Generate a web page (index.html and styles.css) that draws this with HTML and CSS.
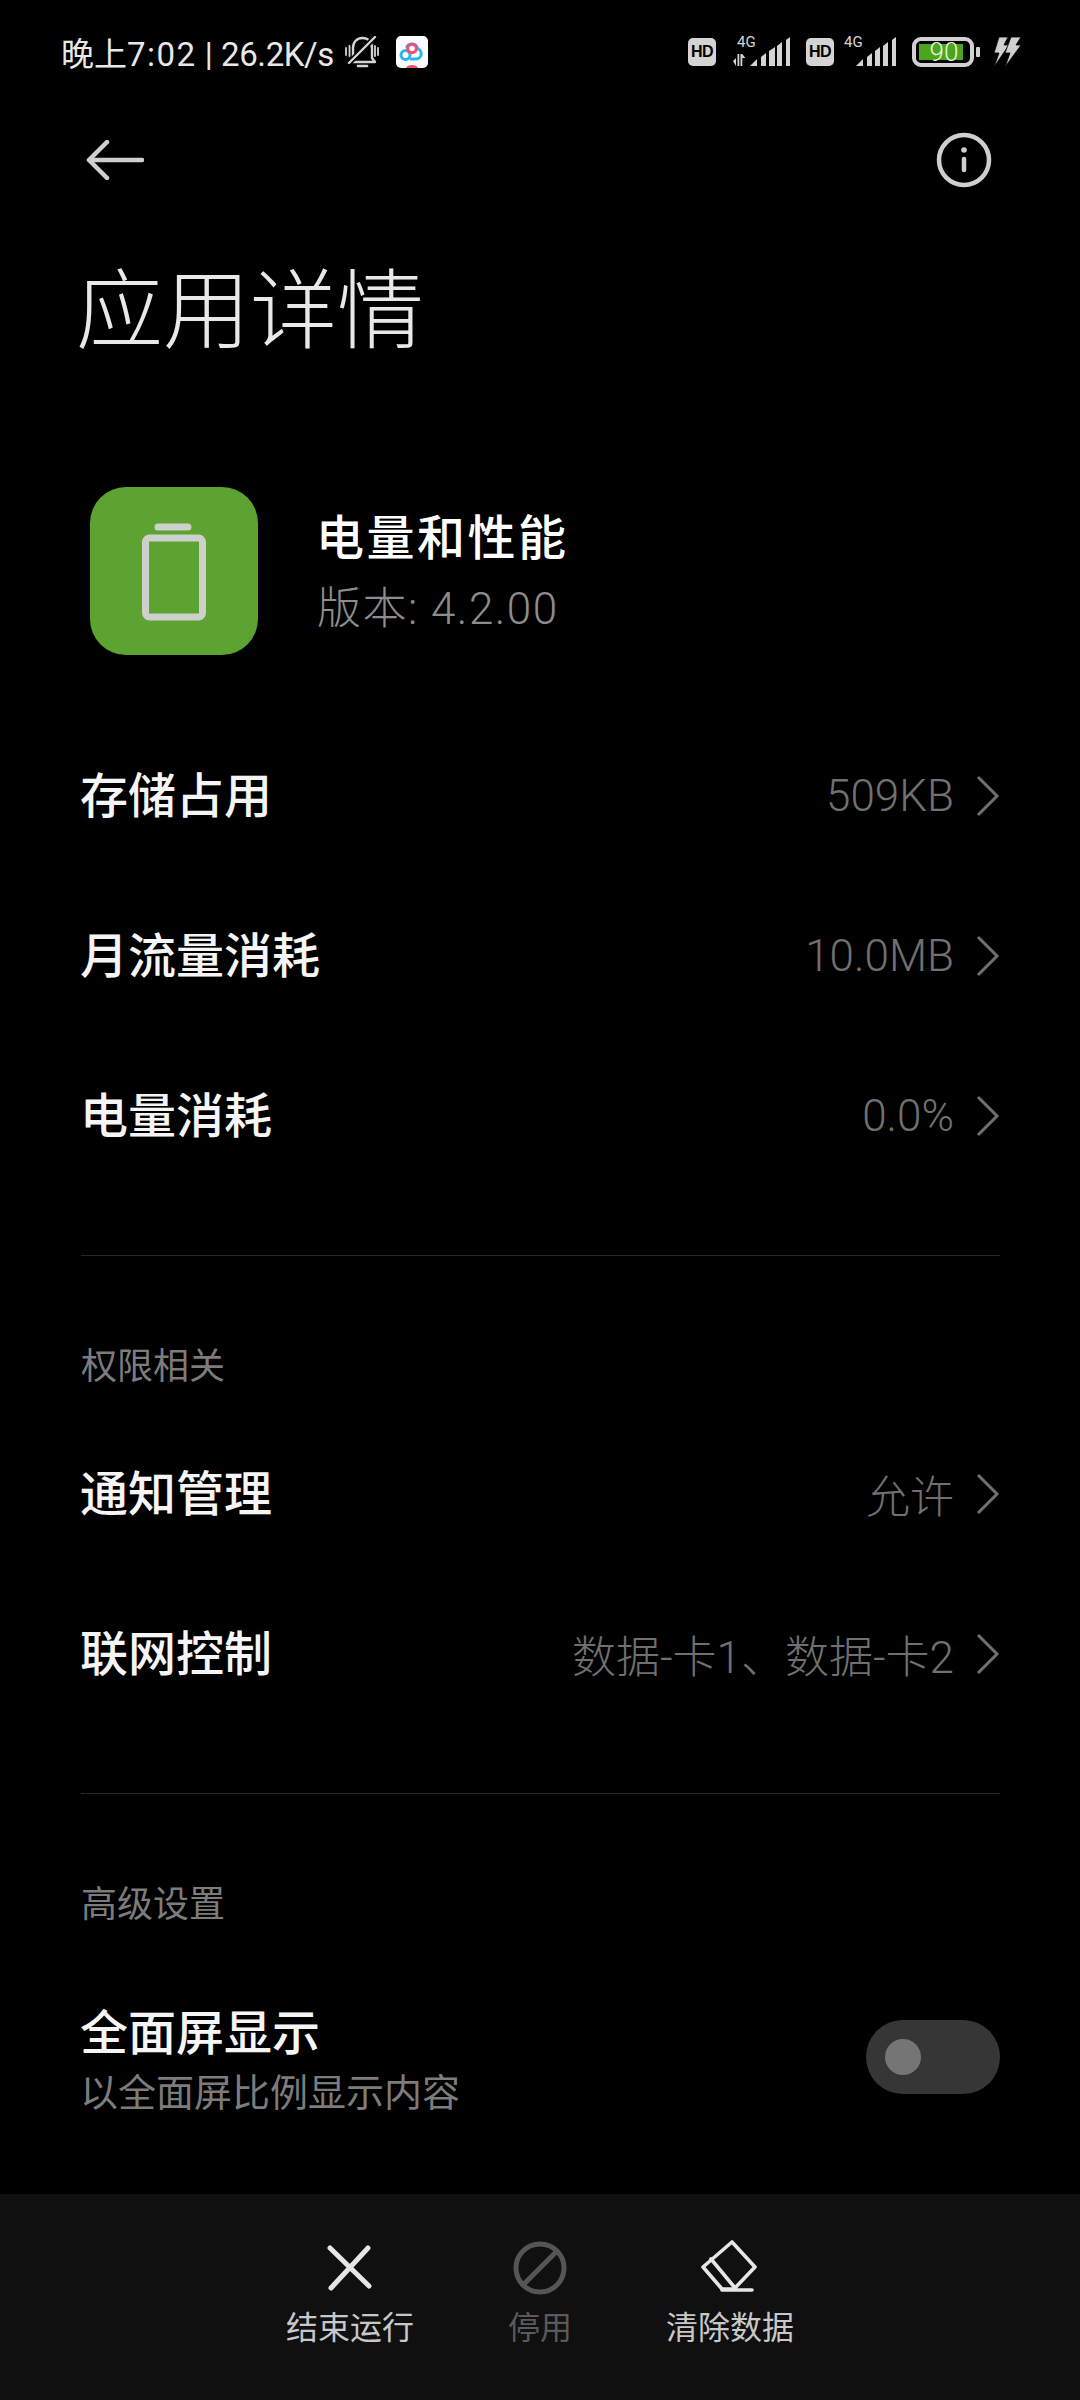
FILE: index.html
```html
<!DOCTYPE html>
<html lang="zh-CN">
<head>
<meta charset="utf-8">
<title>应用详情</title>
<link rel="stylesheet" href="styles.css">
</head>
<body>
<div class="page">
  <header class="status">
    <div class="status-left">
      <span class="status-text">晚上<span class="clock">7:02</span> | <span class="speed">26.2K/s</span></span>
      <svg class="bell" width="34" height="32" viewBox="0 0 34 32" fill="none" stroke="#d4d4d4" stroke-width="2.400" stroke-linecap="round" stroke-linejoin="round">
        <path d="M5 26h25l-3-4V12c0-6-4-10-9.500-10S8 6 8 12v10z"/>
        <path d="M4 27L30 1" stroke="#000" stroke-width="5.500"/>
        <path d="M4 27L30 1"/>
        <path d="M1 12v7M4.500 10v10M30 10v10M33 12v7" stroke-width="1.800"/>
        <path d="M13 30h9" stroke-width="2.600"/>
      </svg>
      <svg class="applogo" width="32" height="32" viewBox="0 0 32 32">
        <rect width="32" height="32" rx="5" fill="#fff"/>
        <circle cx="9.500" cy="19" r="4.500" fill="none" stroke="#2bb4f2" stroke-width="3"/>
        <path d="M20 12.500a4.800 4.800 0 1 1 0 10.500h-6" fill="none" stroke="#2bb4f2" stroke-width="3"/>
        <path d="M10.500 12a5.800 5.800 0 0 1 11 0" fill="none" stroke="#2bb4f2" stroke-width="3"/>
        <circle cx="16" cy="12.500" r="4.300" fill="none" stroke="#f0506e" stroke-width="3"/>
        <path d="M10 32a6 3 0 0 1 12 0z" fill="#f0506e"/>
      </svg>
    </div>
    <div class="status-right">
      <span class="hd">HD</span>
      <svg class="sig-a" width="57" height="48" viewBox="0 -8 57 48">
        <text class="four-g" x="4" y="11">4G</text>
        <path d="M0 25l3-3v8zM4.500 18h1.800v12H4.500zM7.500 18h1.800v12H7.500zM9.300 18l3 4h-3z" fill="#d4d4d4"/>
        <g fill="#d4d4d4">
          <polygon points="17,30 24,23 24,30"/>
          <polygon points="28,21 33,17 33,30 28,30"/>
          <polygon points="36,15 42,11 42,30 36,30"/>
          <polygon points="44,10 49,6 49,30 44,30"/>
          <polygon points="53,4 57,1 57,30 53,30"/>
        </g>
      </svg>
      <span class="hd">HD</span>
      <svg class="sig-b" width="52" height="48" viewBox="0 -8 52 48">
        <text class="four-g" x="0" y="11">4G</text>
        <g fill="#d4d4d4">
          <polygon points="12,30 19,23 19,30"/>
          <polygon points="23,21 28,17 28,30 23,30"/>
          <polygon points="31,15 36,11 36,30 31,30"/>
          <polygon points="39,10 44,6 44,30 39,30"/>
          <polygon points="48,4 52,1 52,30 48,30"/>
        </g>
      </svg>
      <div class="battery">
        <div class="battery-body"><div class="battery-fill"></div><span class="battery-num">90</span></div>
        <div class="battery-nub"></div>
      </div>
      <svg class="bolt" width="29" height="32" viewBox="0 0 29 32" fill="#cfcfcf" stroke="#000" stroke-width="0.800">
        <path d="M6 1h9l-4 8h5L1 31l5-14H1z"/>
        <path d="M18 1h10l-5 8h5L12 31l5-14h-5z"/>
      </svg>
    </div>
  </header>

  <nav class="toolbar">
    <svg class="back" width="58" height="40" viewBox="0 0 58 40" fill="none" stroke="#cfcfcf" stroke-width="4.500" stroke-linecap="round" stroke-linejoin="round">
      <path d="M21 2L3 20l18 18M3 20h53"/>
    </svg>
    <svg class="info" width="56" height="56" viewBox="0 0 56 56" fill="none" stroke="#cfcfcf" stroke-width="4.500" stroke-linecap="round">
      <circle cx="28" cy="28" r="25"/>
      <path d="M28 27v11"/>
      <circle cx="28" cy="18" r="2.800" fill="#cfcfcf" stroke="none"/>
    </svg>
  </nav>

  <h1 class="title">应用详情</h1>

  <section class="app">
    <div class="app-icon">
      <svg width="66" height="98" viewBox="0 0 66 98" fill="none" stroke="#cdd0cb">
        <rect x="4.500" y="15" width="57" height="79" rx="4" stroke-width="7"/>
        <path d="M17 4h30" stroke-width="7" stroke-linecap="round"/>
      </svg>
    </div>
    <div class="app-text">
      <div class="app-name">电量和性能</div>
      <div class="app-version">版本: 4.2.00</div>
    </div>
  </section>

  <main class="content">
    <section class="group">
      <div class="row"><span class="row-label">存储占用</span><span class="row-value">509KB</span><svg class="chev" width="24" height="44" viewBox="0 0 24 44" fill="none"><path d="M2 3l19 19L2 41"/></svg></div>
      <div class="row"><span class="row-label">月流量消耗</span><span class="row-value">10.0MB</span><svg class="chev" width="24" height="44" viewBox="0 0 24 44" fill="none"><path d="M2 3l19 19L2 41"/></svg></div>
      <div class="row"><span class="row-label">电量消耗</span><span class="row-value">0.0%</span><svg class="chev" width="24" height="44" viewBox="0 0 24 44" fill="none"><path d="M2 3l19 19L2 41"/></svg></div>
    </section>
    <hr class="divider">
    <section class="group">
      <h2 class="group-title">权限相关</h2>
      <div class="row"><span class="row-label">通知管理</span><span class="row-value">允许</span><svg class="chev" width="24" height="44" viewBox="0 0 24 44" fill="none"><path d="M2 3l19 19L2 41"/></svg></div>
      <div class="row"><span class="row-label">联网控制</span><span class="row-value">数据-卡1、数据-卡2</span><svg class="chev" width="24" height="44" viewBox="0 0 24 44" fill="none"><path d="M2 3l19 19L2 41"/></svg></div>
    </section>
    <hr class="divider">
    <section class="group">
      <h2 class="group-title">高级设置</h2>
      <div class="row row-switch">
        <div class="switch-text">
          <div class="row-label">全面屏显示</div>
          <div class="row-sub">以全面屏比例显示内容</div>
        </div>
        <div class="switch"><div class="knob"></div></div>
      </div>
    </section>
  </main>

  <footer class="actions">
    <div class="action">
      <svg width="60" height="58" viewBox="0 0 60 58" fill="none" stroke="#e6e6e6" stroke-width="5" stroke-linecap="round">
        <path d="M10 10l39 38M48 10L11 50"/>
      </svg>
      <span class="action-label">结束运行</span>
    </div>
    <div class="action action-off">
      <svg width="60" height="58" viewBox="0 0 60 58" fill="none" stroke="#555" stroke-width="5" stroke-linecap="round">
        <circle cx="30" cy="30" r="24"/>
        <path d="M13 47l34-34"/>
      </svg>
      <span class="action-label">停用</span>
    </div>
    <div class="action">
      <svg width="60" height="58" viewBox="0 0 60 58" fill="none" stroke="#e6e6e6" stroke-width="3.600" stroke-linejoin="round" stroke-linecap="round">
        <path d="M32 4l23 25-21 22H22L3 29z"/>
        <path d="M11 21l24 29M22 52h30"/>
      </svg>
      <span class="action-label">清除数据</span>
    </div>
  </footer>
</div>
</body>
</html>
```

FILE: styles.css
```css
* { box-sizing: border-box; }
html, body { margin: 0; padding: 0; background: #000; }
body {
  width: 1080px;
  height: 2400px;
  overflow: hidden;
  font-family: "Roboto", "Noto Sans CJK SC", sans-serif;
  color: #fff;
}
.page { width: 1080px; height: 2400px; display: flex; flex-direction: column; }

/* status bar */
.status {
  height: 104px;
  padding: 0 58px 0 61px;
  display: flex;
  align-items: center;
  justify-content: space-between;
  flex: none;
}
.status-left { display: flex; align-items: center; }
.status-text { font-size: 33px; color: #e8e8e8; width: 284px; white-space: nowrap; font-weight: 400; }
.clock { letter-spacing: 1.500px; }
.speed { letter-spacing: -0.400px; }
.applogo { margin-left: 17px; }
.status-right { display: flex; align-items: center; }
.hd {
  width: 28px; height: 28px;
  background: #d4d4d4;
  border-radius: 5px;
  color: #000;
  font-family: "Liberation Sans", sans-serif;
  font-size: 16px;
  font-weight: 700;
  line-height: 28px;
  text-align: center;
  letter-spacing: -0.500px;
}
.sig-a { margin: 0 16px 0 17px; }
.sig-b { margin: 0 16px 0 10px; }
.four-g { font-family: "Roboto", sans-serif; font-size: 15px; fill: #d4d4d4; }
.battery { display: flex; align-items: center; width: 68px; }
.battery-body {
  position: relative;
  width: 62px; height: 30px;
  border: 4px solid #d2d2d2;
  border-radius: 9px;
  padding: 3px;
}
.battery-fill { width: 44px; height: 16px; background: #4ca61d; }
.battery-num {
  position: absolute;
  left: 10px; top: -5px;
  width: 36px;
  font-size: 26px;
  line-height: 32px;
  color: #e6f7da;
  text-align: center;
  font-weight: 300;
}
.battery-nub { width: 4px; height: 10px; background: #d2d2d2; margin-left: 2px; border-radius: 1px; }
.bolt { margin-left: 13px; }

/* toolbar */
.toolbar {
  height: 112px;
  padding: 0 88px 0 86px;
  display: flex;
  align-items: center;
  justify-content: space-between;
  flex: none;
}
.title {
  margin: 51px 0 0;
  padding-left: 76px;
  font-size: 87px;
  line-height: 90px;
  height: 90px;
  font-weight: 200;
  color: #e8e8e8;
  flex: none;
}

/* app header */
.app {
  margin-top: 130px;
  padding-left: 90px;
  display: flex;
  align-items: center;
  flex: none;
}
.app-icon {
  width: 168px; height: 168px;
  border-radius: 36px;
  background: #5ca332;
  display: flex;
  align-items: center;
  justify-content: center;
  padding-top: 2px;
}
.app-text { margin-left: 59px; margin-top: 4px; }
.app-name { font-size: 48px; line-height: 60px; letter-spacing: 2.500px; font-weight: 500; color: #fff; margin-top: -2px; margin-left: -1px; }
.app-version { font-size: 44px; line-height: 52px; margin-top: 14px; color: #8c8c8c; font-weight: 300; letter-spacing: 1.500px; }

/* list */
.content { flex: 1; padding: 61px 80px 0 81px; min-height: 0; }
.group { display: flex; flex-direction: column; }
.row { height: 160px; display: flex; align-items: center; }
.row-label { font-size: 48px; font-weight: 500; color: #f5f5f5; line-height: 60px; margin-left: -1px; padding-top: 2px; }
.row-value { margin-left: auto; font-size: 44px; font-weight: 300; color: #707070; white-space: nowrap; margin-right: 2px; }
.chev { margin-left: 20px; flex: none; stroke: #707070; stroke-width: 3; }
.divider { height: 1px; border: 0; margin: 59px 0 0; background: #262626; }
.group-title {
  margin: 86px 0 22px;
  font-size: 36px;
  line-height: 50px;
  font-weight: 400;
  color: #7c7c7c;
}
.row-switch { height: 210px; }
.switch-text { display: flex; flex-direction: column; padding-top: 6px; }
.row-sub { font-size: 38px; line-height: 50px; margin-top: 4px; margin-left: -1px; color: #7c7c7c; font-weight: 400; }
.switch {
  margin-left: auto;
  width: 134px; height: 74px;
  border-radius: 37px;
  background: #363636;
  padding: 19px;
}
.knob { width: 36px; height: 36px; border-radius: 50%; background: #757575; }

/* bottom actions */
.actions {
  flex: none;
  height: 206px;
  background: #101010;
  padding-top: 44px;
  display: flex;
  justify-content: center;
}
.action { width: 190px; display: flex; flex-direction: column; align-items: center; }
.action-label { margin-top: 10px; font-size: 32px; line-height: 44px; color: #c8c8c8; }
.action-off .action-label { color: #5a5a5a; }
```
